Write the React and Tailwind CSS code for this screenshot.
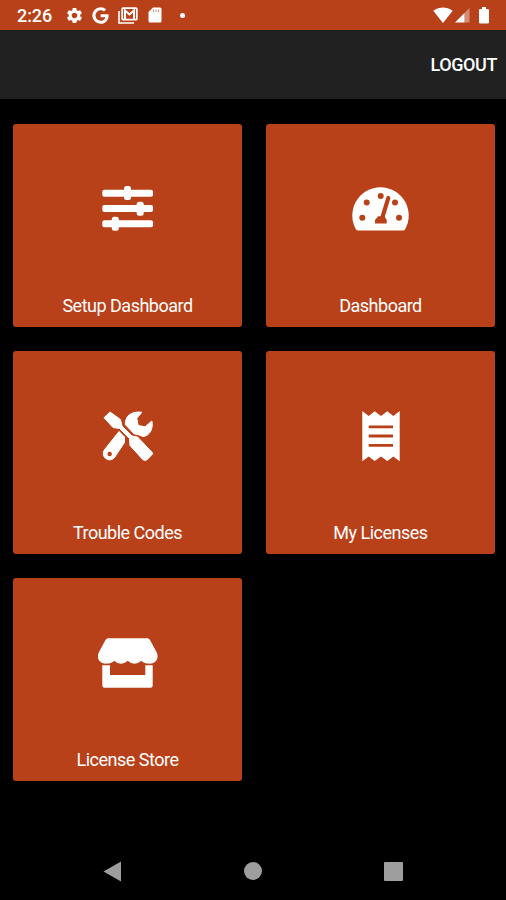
import { FaGoogle } from 'react-icons/fa';
import { MdSettings, MdSignalWifi4Bar } from 'react-icons/md';

const SlidersIcon = () => (
  <svg width="60" height="60" viewBox="0 0 60 60" fill="currentColor">
    <rect x="4.3" y="10.7" width="50.7" height="7" rx="2" />
    <rect x="4.3" y="26" width="50.7" height="7" rx="2" />
    <rect x="4.3" y="41.2" width="50.7" height="7" rx="2" />
    <rect x="26" y="7" width="7" height="14" rx="2.5" />
    <rect x="38.7" y="22.7" width="7" height="14" rx="2.5" />
    <rect x="13.8" y="37.7" width="7" height="14" rx="2.5" />
  </svg>
);

const GaugeIcon = () => (
  <svg width="60" height="60" viewBox="0 0 60 60" fill="currentColor">
    <path d="M7 51.5Q5.6 51.5 5 50.5A28.2 28.2 0 1 1 54 50.5Q53.4 51.5 52 51.5Z" />
    <g className="text-[#b94119]">
      <circle cx="15.7" cy="23.5" r="3" />
      <circle cx="29.7" cy="17" r="3" />
      <circle cx="44" cy="23.5" r="3" />
      <circle cx="11.3" cy="38.8" r="3" />
      <circle cx="48" cy="38.8" r="3" />
      <path d="M37.3 19L31.5 38" stroke="currentColor" strokeWidth="4.2" strokeLinecap="round" />
      <path d="M27.2 37.2H33.5L35.7 41V44.5H24V41Z" />
    </g>
  </svg>
);

const ToolsIcon = () => (
  <svg width="60" height="60" viewBox="0 0 60 60" fill="currentColor" stroke="currentColor" strokeLinejoin="round">
    {/* Wrench head and handle */}
    <path d="M27.3 18.5C27 11 32 5 43.8 6.2L38.8 12.5L40.2 19.5L47 20.8L53.9 15C55.500 22 52 30 45 30.5L40.5 28.8L36 27.8Z" />
    <path d="M21 25.500L26.5 31V36.500L16.200 52A6.4 6.4 0 0 1 6.3 44Z" />
    {/* Screwdriver */}
    <path d="M12 6L22.5 13.5L24 20L34 30L39.5 31L54.3 46.5Q55 47.5 54.3 48.3L49 53.8Q47 55 45 53.8L32 39.5L31.500 32.5L21.5 22.5L15 21.5L6 11.7Z" />
    <circle cx="11.7" cy="48" r="2.2" className="fill-[#b94119] stroke-none" />
  </svg>
);

const ReceiptIcon = () => (
  <svg width="60" height="60" viewBox="0 0 60 60" fill="currentColor">
    <path d="M11.3 5L17.7 9.9L23.7 5.3L30 9.9L36.3 5.3L42.3 9.9L48.7 5V55.300L42.3 50.4L36.3 55L30 50.4L23.7 55L17.7 50.4L11.3 55.300Z" />
    <path d="M17.7 20.8H42M17.7 30H42M17.7 39.3H42" stroke="#b94119" strokeWidth="2.8" />
  </svg>
);

const StoreIcon = () => (
  <svg width="60" height="60" viewBox="0 0 60 60" fill="currentColor">
    <path d="M10 5.3H49.5Q51 5.3 52 7L58.5 19Q61 24 58 28Q55.5 31 51 30.6Q46 30.8 43.300 27.8Q40.500 30.7 36.600 30.7Q32.500 30.7 29.800 27.8Q27 30.7 23 30.7Q19 30.7 16.200 27.8Q13.500 30.8 8.5 30.6Q4 31 1.5 28Q-1.5 24 1 19L7.5 7Q8.5 5.3 10 5.3Z" />
    <path d="M4.3 32.3H12V42H47.3V32.3H54.7V52.2Q54.7 54.7 52.2 54.7H6.8Q4.3 54.7 4.3 52.2Z" />
  </svg>
);

const MailIcon = () => (
  <svg width="20" height="17" viewBox="0 0 20 17" fill="none" stroke="currentColor">
    <path d="M1 4v12h15" strokeWidth="1.6" />
    <rect x="4.2" y="1.2" width="14.6" height="11.5" rx="1" strokeWidth="1.8" />
    <path d="M7 12V3.5L11.5 7.5L16 3.5V12" strokeWidth="2" />
  </svg>
);

const SdCardIcon = () => (
  <svg width="14" height="16" viewBox="0 0 14 16" fill="currentColor">
    <path d="M5 .5H12Q13.5 .5 13.5 2V14Q13.5 15.5 12 15.5H2Q.5 15.5 .5 14V5Z" />
    <path d="M5.5 2.5V5M8 2.5V5M10.5 2.5V5" stroke="#b94119" strokeWidth="1" opacity="0.6" />
  </svg>
);

const SignalIcon = () => (
  <svg width="15" height="16" viewBox="0 0 15 16" fill="currentColor">
    <path d="M0 15.5L9.5 6v9.5z" />
    <path d="M9.5 6L14.5 1v14.5h-5z" opacity="0.4" />
  </svg>
);

const BatteryIcon = () => (
  <svg width="12" height="17" viewBox="0 0 12 17" fill="currentColor">
    <path d="M4 0H8V2H9.8Q11 2 11 3.2V15.3Q11 16.5 9.8 16.5H2.2Q1 16.5 1 15.3V3.2Q1 2 2.2 2H4Z" />
  </svg>
);

const tiles = [
  { label: 'Setup Dashboard', Icon: SlidersIcon },
  { label: 'Dashboard', Icon: GaugeIcon },
  { label: 'Trouble Codes', Icon: ToolsIcon },
  { label: 'My Licenses', Icon: ReceiptIcon },
  { label: 'License Store', Icon: StoreIcon },
];

export default function App() {
  return (
    <div className="flex h-[900px] w-[506px] flex-col overflow-hidden bg-black font-['Roboto',sans-serif] text-white">
      {/* Status bar */}
      <div className="flex h-[30px] shrink-0 items-center justify-between bg-[#b94119] pl-[17px] pr-[16px]">
        <div className="flex items-center">
          <span className="w-[48px] pt-0.5 text-[18px] font-medium leading-none tracking-[-0.1px]">2:26</span>
          <MdSettings size={19} />
          <FaGoogle size={17} className="ml-[8px]" />
          <span className="ml-[9px]"><MailIcon /></span>
          <span className="ml-[10px]"><SdCardIcon /></span>
          <span className="ml-[18px] h-[5px] w-[5px] rounded-full bg-white" />
        </div>
        <div className="flex items-center">
          <MdSignalWifi4Bar size={20} />
          <span className="ml-[2px]"><SignalIcon /></span>
          <span className="ml-[8px]"><BatteryIcon /></span>
        </div>
      </div>

      {/* App bar */}
      <header className="flex h-[69px] shrink-0 items-center justify-end bg-[#212121] pr-[9px]">
        <button className="pt-px text-[18px] font-medium leading-none tracking-[-0.4px]">LOGOUT</button>
      </header>

      {/* Menu tiles */}
      <main className="grid grid-cols-2 gap-6 pl-[13px] pr-[11px] pt-[25px]">
        {tiles.map(({ label, Icon }) => (
          <button key={label} className="flex h-[203px] flex-col items-center rounded-[3px] bg-[#b94119] pt-[55px]">
            <Icon />
            <span className="mt-[57px] text-[18px] leading-5 tracking-[-0.5px]">{label}</span>
          </button>
        ))}
      </main>

      {/* Navigation bar */}
      <nav className="mt-auto flex h-[58px] items-center justify-between px-[103px] text-[#9e9e9e]">
        <svg width="19" height="21" viewBox="0 0 19 21" fill="currentColor">
          <path d="M18 .5v20L.5 10.5z" />
        </svg>
        <span className="h-[18px] w-[18px] rounded-full bg-[#9e9e9e]" />
        <span className="h-[19px] w-[19px] rounded-[1px] bg-[#9e9e9e]" />
      </nav>
    </div>
  );
}
